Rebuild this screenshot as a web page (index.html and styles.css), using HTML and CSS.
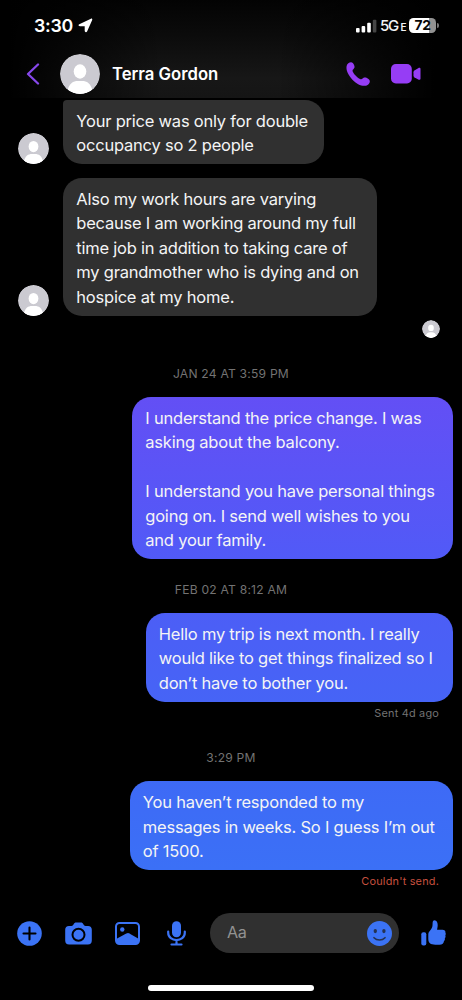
FILE: index.html
```html
<!DOCTYPE html>
<html lang="en">
<head>
<meta charset="utf-8">
<title>Terra Gordon</title>
<link rel="stylesheet" href="styles.css">
</head>
<body>
<svg class="defs" width="0" height="0">
  <symbol id="person" viewBox="0 0 40 40">
    <circle cx="20" cy="20" r="20" fill="#cbcad1"/>
    <ellipse cx="20" cy="17.5" rx="6.3" ry="7.2" fill="#fff"/>
    <path d="M7.8 35.8C9.5 29.5 13 27 18 27h4c5 0 8.500 2.500 10.200 8.800A20 20 0 0 1 7.800 35.800Z" fill="#fff"/>
  </symbol>
</svg>
<div class="screen">
  <header class="header">
    <div class="status">
      <span class="clock">3:30</span>
      <svg class="location" viewBox="0 0 15 15"><path d="M1.300 6.300 12.900.700c.9-.4 1.700.4 1.300 1.300L9.200 13.300c-.6 1.300-2.500 1.100-2.500-.5V8.300H2.100C.4 8.300 0 6.900 1.300 6.300Z"/></svg>
      <svg class="signal" viewBox="0 0 21 14"><rect x="0" y="9" width="3.600" height="4.500" rx="1"/><rect x="5.600" y="7" width="3.600" height="6.500" rx="1"/><rect x="11.200" y="3.800" width="3.600" height="9.700" rx="1"/><rect class="weak" x="16.800" y="0.800" width="3.600" height="12.700" rx="1"/></svg>
      <span class="network">5G<small>E</small></span>
      <span class="battery">72</span>
      <i class="battery-tip"></i>
    </div>
    <div class="titlebar">
      <svg class="back" viewBox="0 0 14 22"><path d="M12 1.500 2 11l10 9.500"/></svg>
      <svg class="avatar avatar-title"><use href="#person"/></svg>
      <h1 class="name">Terra Gordon</h1>
      <svg class="phone" viewBox="0 0 24 24"><path d="M.7 3.700C1.300 1.600 3.200.1 5.200.2c2 .1 3.700 3.500 3.300 5.400C8.200 7 6.100 7.800 6.600 9.200c.9 2.600 5.200 7 8 8 1.500.5 2.200-1.200 3.400-1.600 2.100-.7 5.700 1.500 5.800 3.400.1 2.500-2.200 4.600-5 4.800C10.500 24.400-1.400 11.500.7 3.700Z"/></svg>
      <svg class="video" viewBox="0 0 30 20"><rect x="0" y="0" width="20.800" height="19.500" rx="4.800"/><path d="M22.500 8.200c0-.7.300-1.200.8-1.700l3.900-2.300c1.200-.7 2.300-.3 2.300.9v9.500c0 1.200-1.100 1.600-2.300.9l-3.900-2.300c-.5-.5-.8-1-.8-1.700Z"/></svg>
    </div>
  </header>

  <main class="chat">
    <div class="row">
      <svg class="avatar avatar-row"><use href="#person"/></svg>
      <p class="bubble received continued">Your price was only for double<br>occupancy so 2 people</p>
    </div>
    <div class="row">
      <svg class="avatar avatar-row"><use href="#person"/></svg>
      <p class="bubble received long">Also my work hours are varying<br>because I am working around my full<br>time job in addition to taking care of<br>my grandmother who is dying and on<br>hospice at my home.</p>
    </div>
    <svg class="avatar avatar-seen"><use href="#person"/></svg>
    <time class="stamp first">JAN 24 AT 3:59 PM</time>
    <p class="bubble sent understand">I understand the price change. I was<br>asking about the balcony.<br><br>I understand you have personal things<br>going on. I send well wishes to you<br>and your family.</p>
    <time class="stamp second">FEB 02 AT 8:12 AM</time>
    <p class="bubble sent hello">Hello my trip is next month. I really<br>would like to get things finalized so I<br>don’t have to bother you.</p>
    <span class="receipt">Sent 4d ago</span>
    <time class="stamp third">3:29 PM</time>
    <p class="bubble sent weeks">You haven’t responded to my<br>messages in weeks. So I guess I’m out<br>of 1500.</p>
    <span class="receipt failed">Couldn't send.</span>
  </main>

  <footer class="composer">
    <svg class="plus" viewBox="0 0 25 25"><circle cx="12.500" cy="12.500" r="12.300"/><path class="cut" d="M12.500 6.500v12M6.500 12.500h12"/></svg>
    <svg class="camera" viewBox="0 0 27 23"><path d="M4 3.900h2.500c1 0 1.500-.5 2-1.400C9.200 1 10 .5 11.300.5h4.400c1.300 0 2.100.5 2.800 2 .5.900 1 1.400 2 1.400H23c2.500 0 3.800 1.300 3.800 3.800V18.500c0 2.700-1.300 4-4 4H4.200c-2.700 0-4-1.300-4-4V7.700C.2 5.200 1.500 3.900 4 3.900Z"/><circle class="cut" cx="13.500" cy="12.700" r="6"/></svg>
    <svg class="photo" viewBox="0 0 25 23"><rect class="frame" x="1" y="1" width="23" height="21" rx="3.500"/><circle cx="7.300" cy="7.500" r="2.200"/><path d="M1 17.500 2.500 16.300 9 12.800c2-1.100 3-1.800 4-1.800s2 .8 4 2l7 4v1.500c0 2.300-1.200 3.500-3.500 3.500h-16C2.200 22 1 20.800 1 18.500Z"/></svg>
    <svg class="mic" viewBox="0 0 19 25"><rect x="5" y=".3" width="9" height="16" rx="4.500"/><path class="line" d="M1.200 10.500v1.200c0 9.800 16.600 9.800 16.600 0v-1.200M9.500 19.500v3.500M4.500 23.500h10"/></svg>
    <div class="field">
      <span class="placeholder">Aa</span>
      <svg class="smile" viewBox="0 0 25 25"><circle cx="12.500" cy="12.500" r="12.500"/><ellipse class="ink" cx="8.300" cy="10.100" rx="1.700" ry="2.100"/><ellipse class="ink" cx="16.900" cy="10.100" rx="1.700" ry="2.100"/><path class="grin" d="M7 16.700c2.800 3 8.200 3 11 0"/></svg>
    </div>
    <svg class="like" viewBox="0 0 25 26"><rect x=".3" y="12.300" width="5" height="13.300" rx="2"/><path d="M7.300 14.500c0-2 1-3 2.400-4.700 1.600-2 1.900-3.500 1.900-6.500C11.600 1 12.300.2 13.500.2c2.200 0 3.300 2.400 3.200 5.100-.1 2-.6 3.500-.6 4.500h5.300c2 0 3.300 1.100 3 2.600.5.800.5 2-.1 2.800.5 1 .3 2.300-.5 3 .3 1.200 0 2.200-.8 2.900-.2 2.400-1.700 3.600-4.500 3.600h-4.200c-4.800 0-7-1.800-7-5.700Z"/></svg>
  </footer>
  <div class="home"></div>
</div>
</body>
</html>
```
FILE: styles.css
```css
* { box-sizing: border-box; }
body { margin: 0; background: #000; }
.defs { display: block; position: absolute; }
.screen {
  width: 462px;
  height: 1000px;
  display: flex;
  flex-direction: column;
  overflow: hidden;
  background: #000;
  color: #f4f4f5;
  font-family: Inter, "Liberation Sans", sans-serif;
}
svg { display: block; flex: none; }
.avatar { border-radius: 50%; }

/* Header */
.header {
  height: 98px;
  flex: none;
  background:
    linear-gradient(90deg, #000 2%, transparent 35%, transparent 60%, #000 94%),
    linear-gradient(180deg, #030303, #0b0b0b 35%, #171717 80%, #151515);
}
.status {
  height: 50px;
  padding: 1px 23px 0 34px;
  display: flex;
  align-items: center;
}
.clock { font-size: 17.800px; font-weight: 600; letter-spacing: -0.25px; width: 44px; color: #fff; }
.location { width: 15px; height: 15px; fill: #fff; }
.signal { width: 21px; height: 14px; flex: none; fill: #fff; margin-left: 263px; }
.signal .weak { fill: #454545; }
.network { width: 29px; flex: none; margin-left: 3px; font-size: 15px; font-weight: 500; letter-spacing: -1.300px; white-space: nowrap; }
.network small { font-size: 10px; margin-left: 2.500px; font-weight: 600; }
.battery {
  width: 27px;
  flex: none;
  height: 15px;
  border-radius: 4.500px;
  background: linear-gradient(90deg, #fff 73%, #929292 73%);
  color: #080808;
  font-size: 13.800px;
  font-weight: 700;
  line-height: 15px;
  text-align: center;
  letter-spacing: -0.3px;
}
.battery-tip { width: 1.500px; height: 5px; margin-left: 1px; border-radius: 0 2px 2px 0; background: #777; }
.titlebar { height: 48px; padding-left: 26px; display: flex; align-items: center; }
.back { width: 14px; height: 22px; fill: none; stroke: #8748ec; stroke-width: 2.300; stroke-linecap: round; stroke-linejoin: round; }
.avatar-title { width: 40px; height: 40px; margin-left: 20px; }
.name { width: 234px; margin: 0 0 0 12px; font-size: 16.700px; font-weight: 600; line-height: 24px; color: #fff; white-space: nowrap; }
.phone { width: 24px; height: 24px; fill: #963df5; }
.video { width: 30px; height: 20px; margin-left: 21px; fill: #963df5; }

/* Conversation */
.chat { height: 802px; flex: none; display: flex; flex-direction: column; padding: 1.500px 9px 0 18px; }
.row { display: flex; align-items: flex-end; margin-bottom: 13.500px; }
.avatar-row { width: 31px; height: 31px; margin-right: 14px; }
.bubble {
  margin: 0;
  padding: 9px 0 6.500px 13.300px;
  border-radius: 19px;
  font-size: 16.500px;
  line-height: 24.500px;
  letter-spacing: -0.22px;
  white-space: nowrap;
}
.received { background: #303030; }
.continued { width: 261px; border-top-left-radius: 4px; }
.long { width: 314px; }
.avatar-seen { width: 18px; height: 18px; align-self: flex-end; margin: -9px 13px 0 0; }
.stamp, .receipt { color: #737373; white-space: nowrap; }
.stamp { width: 462px; margin-left: -18px; text-align: center; font-size: 12.100px; line-height: 18px; letter-spacing: 0.22px; }
.stamp.first { margin-top: 26.500px; margin-bottom: 14px; }
.stamp.second { margin-top: 21.700px; margin-bottom: 14.200px; }
.stamp.third { margin-top: 27.300px; margin-bottom: 14px; }
.sent { align-self: flex-end; }
.understand { width: 321px; background: linear-gradient(#634ff5, #515af7); }
.hello { width: 307.500px; background: linear-gradient(#4c5ef6, #4664f6); }
.weeks { width: 323.500px; background: linear-gradient(#3e6af6, #3b70f6); }
.receipt { align-self: flex-end; margin: 3px 14px 0 0; font-size: 10.900px; line-height: 17px; letter-spacing: 0.2px; }
.failed { color: #c7503f; }

/* Composer */
.composer { height: 66px; flex: none; padding-left: 17px; display: flex; align-items: center; fill: #3b73f5; }
.plus { width: 25px; height: 25px; }
.plus .cut { stroke: #000; stroke-width: 2.100; stroke-linecap: round; }
.camera { width: 27px; height: 23px; margin-left: 23px; }
.camera .cut { stroke: #000; stroke-width: 2; }
.photo { width: 25px; height: 23px; margin-left: 23px; }
.photo .frame { fill: none; stroke: #3b73f5; stroke-width: 2; }
.mic { width: 19px; height: 25px; margin-left: 27px; }
.mic .line { fill: none; stroke: #3b73f5; stroke-width: 2.200; stroke-linecap: round; }
.field {
  width: 189px;
  height: 40px;
  margin-left: 24px;
  padding: 0 7px 0 17px;
  border-radius: 20px;
  display: flex;
  align-items: center;
  justify-content: space-between;
  background: #303030;
  color: #929292;
  font-size: 16.200px;
}
.placeholder { padding-bottom: 2px; letter-spacing: -0.5px; }
.smile { width: 25px; height: 25px; }
.smile .ink { fill: #243252; }
.smile .grin { fill: none; stroke: #243252; stroke-width: 1.600; stroke-linecap: round; }
.like { width: 25px; height: 26px; margin-left: 22px; }
.home { width: 166px; height: 6px; flex: none; margin: 19px 0 0 148px; border-radius: 3px; background: #fff; }
```
